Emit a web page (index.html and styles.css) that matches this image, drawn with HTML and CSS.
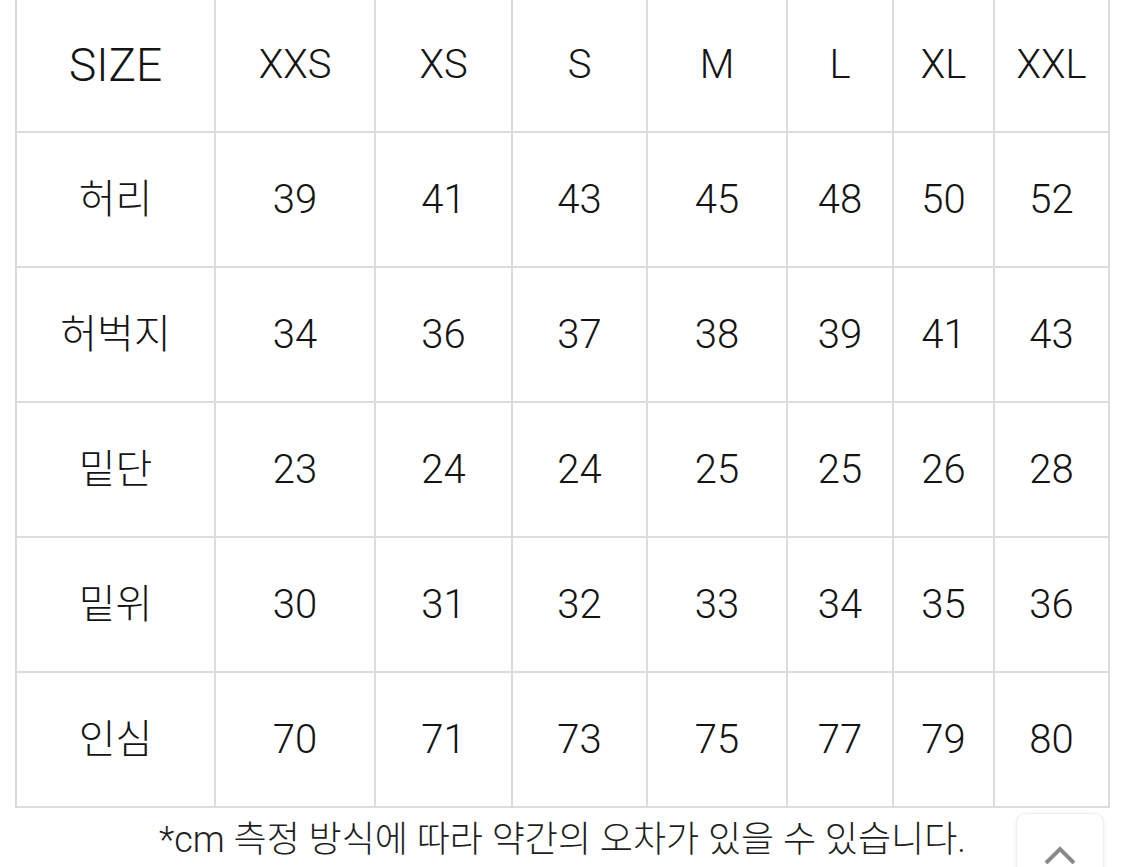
FILE: index.html
```html
<!DOCTYPE html>
<html lang="ko">
<head>
<meta charset="utf-8">
<link rel="stylesheet" href="styles.css">
</head>
<body>
<div class="page">
  <table class="size-table">
    <colgroup>
      <col class="c0"><col class="c1"><col class="c2"><col class="c3"><col class="c4"><col class="c5"><col class="c6"><col class="c7">
    </colgroup>
    <tr class="head"><th>SIZE</th><td>XXS</td><td>XS</td><td>S</td><td>M</td><td>L</td><td>XL</td><td>XXL</td></tr>
    <tr><th class="ko">허리</th><td>39</td><td>41</td><td>43</td><td>45</td><td>48</td><td>50</td><td>52</td></tr>
    <tr><th class="ko">허벅지</th><td>34</td><td>36</td><td>37</td><td>38</td><td>39</td><td>41</td><td>43</td></tr>
    <tr><th class="ko">밑단</th><td>23</td><td>24</td><td>24</td><td>25</td><td>25</td><td>26</td><td>28</td></tr>
    <tr><th class="ko">밑위</th><td>30</td><td>31</td><td>32</td><td>33</td><td>34</td><td>35</td><td>36</td></tr>
    <tr><th class="ko">인심</th><td>70</td><td>71</td><td>73</td><td>75</td><td>77</td><td>79</td><td>80</td></tr>
  </table>
  <p class="note">*cm 측정 방식에 따라 약간의 오차가 있을 수 있습니다.</p>
  <button class="top-btn" aria-label="맨 위로">
    <svg width="34" height="20" viewBox="0 0 34 20"><path d="M3 19 L17 5 L31 19" fill="none" stroke="#8a8a8a" stroke-width="4"/></svg>
  </button>
</div>
</body>
</html>
```

FILE: styles.css
```css
html, body {
  margin: 0;
  padding: 0;
  background: #fff;
  overflow: hidden;
}
body {
  width: 1125px;
  height: 867px;
  font-family: Roboto, "Noto Sans CJK KR", "Noto Sans", sans-serif;
  color: #141414;
}
.page {
  position: relative;
  padding-left: 15px;
  margin-top: -4px;
}
.size-table {
  border-collapse: collapse;
  table-layout: fixed;
  width: 1095px;
}
.c0 { width: 199px; }
.c1 { width: 160px; }
.c2 { width: 137px; }
.c3 { width: 135px; }
.c4 { width: 140px; }
.c5 { width: 106px; }
.c6 { width: 101px; }
.c7 { width: 115px; }
.size-table th,
.size-table td {
  border: 2px solid #dcdcdc;
  height: 133px;
  padding: 0;
  text-align: center;
  vertical-align: middle;
  font-weight: 300;
  font-size: 40px;
  line-height: 1;
}
.size-table th {
  font-size: 46px;
}
.size-table th.ko {
  font-size: 40px;
  font-weight: 300;
}
.note {
  margin: 7px 0 0;
  width: 1095px;
  text-align: center;
  font-size: 36px;
  font-weight: 300;
  line-height: 50px;
  color: #1e1e1e;
}
.top-btn {
  position: absolute;
  left: 1016px;
  top: 817px;
  width: 88px;
  height: 80px;
  background: #fff;
  border: 1px solid #efefef;
  border-radius: 10px;
  box-shadow: 0 1px 5px rgba(0,0,0,0.08);
  padding: 30px 0 0;
  display: flex;
  justify-content: center;
  align-items: flex-start;
}
```
